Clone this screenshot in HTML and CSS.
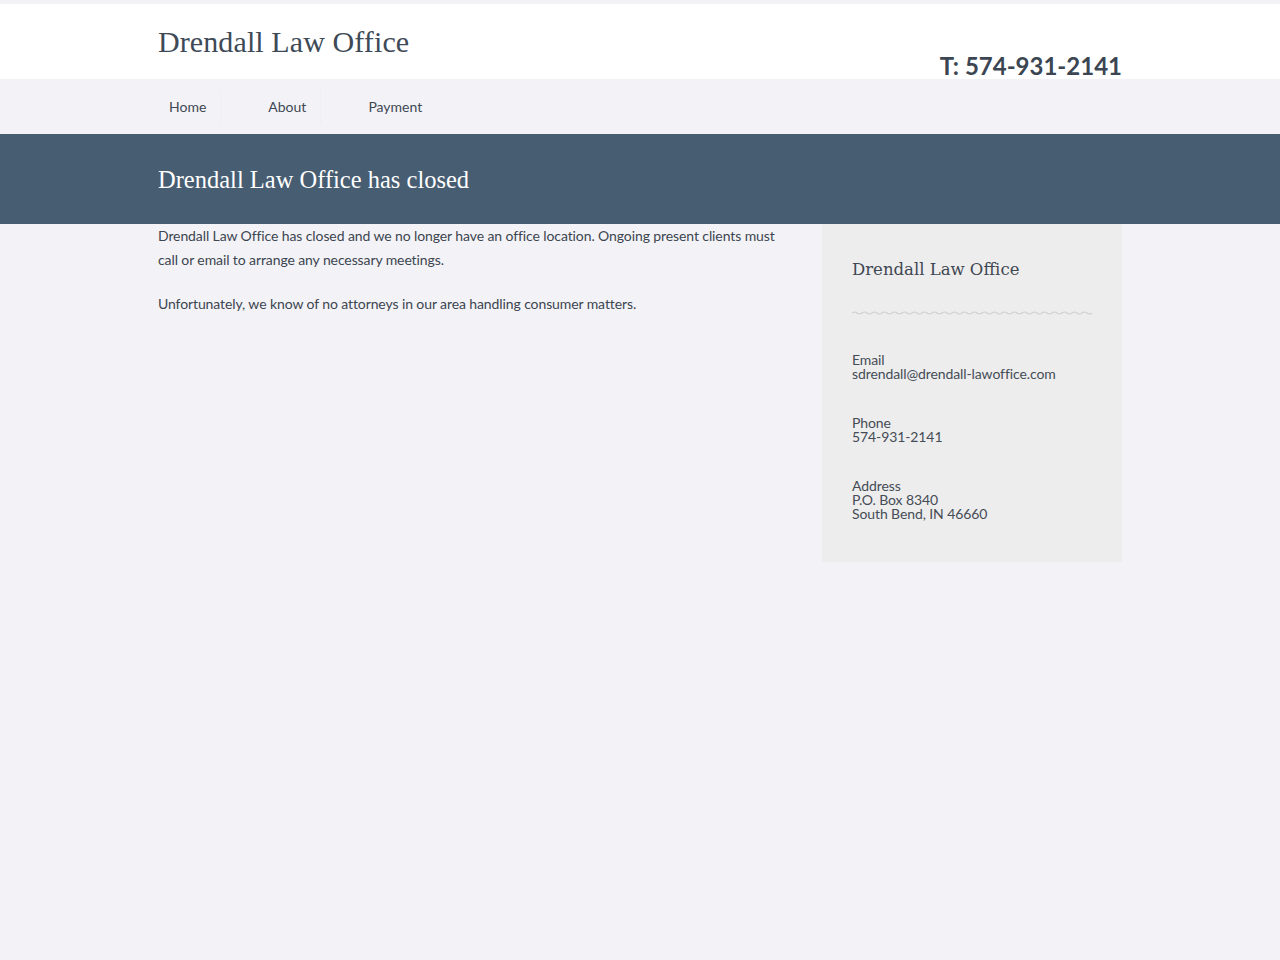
FILE: index.html
```html
<!DOCTYPE html>
<html lang="en">
<head>
<meta charset="utf-8">
<title>Drendall Law Office</title>
<link rel="stylesheet" href="styles.css">
</head>
<body>
<header class="masthead">
  <div class="wrap masthead-inner">
    <div class="site-title">Drendall Law Office</div>
    <div class="site-phone">T: 574-931-2141</div>
  </div>
</header>
<nav class="mainnav">
  <ul class="wrap nav-list">
    <li class="nav-item"><a href="#">Home</a></li>
    <li class="nav-item"><a href="#">About</a></li>
    <li class="nav-item"><a href="#">Payment</a></li>
  </ul>
</nav>
<section class="banner">
  <div class="wrap">
    <h1 class="banner-title">Drendall Law Office has closed</h1>
  </div>
</section>
<main class="wrap page">
  <div class="main-col">
    <p>Drendall Law Office has closed and we no longer have an office location. Ongoing present clients must call or email to arrange any necessary meetings.</p>
    <p>Unfortunately, we know of no attorneys in our area handling consumer matters.</p>
  </div>
  <aside class="sidebar">
    <h2 class="side-title">Drendall Law Office</h2>
    <svg class="wave" width="240" height="6" viewBox="0 0 240 6" aria-hidden="true">
      <path d="M0 3 Q2.5 1 5 3 T10 3 T15 3 T20 3 T25 3 T30 3 T35 3 T40 3 T45 3 T50 3 T55 3 T60 3 T65 3 T70 3 T75 3 T80 3 T85 3 T90 3 T95 3 T100 3 T105 3 T110 3 T115 3 T120 3 T125 3 T130 3 T135 3 T140 3 T145 3 T150 3 T155 3 T160 3 T165 3 T170 3 T175 3 T180 3 T185 3 T190 3 T195 3 T200 3 T205 3 T210 3 T215 3 T220 3 T225 3 T230 3 T235 3 T240 3" fill="none" stroke="#cfcfd2" stroke-width="1.2"/>
    </svg>
    <div class="contact">
      <div class="contact-block">Email<br>sdrendall@drendall-lawoffice.com</div>
      <div class="contact-block">Phone<br>574-931-2141</div>
      <div class="contact-block">Address<br>P.O. Box 8340<br>South Bend, IN 46660</div>
    </div>
  </aside>
</main>
</body>
</html>
```

FILE: styles.css
```css
* { box-sizing: border-box; }

html, body {
  margin: 0;
  padding: 0;
}

body {
  background: #f3f3f7;
  color: #3c4550;
  font-family: Lato, "Open Sans", sans-serif;
  font-size: 14px;
  padding-top: 4px;
}

.wrap {
  width: 964px;
  margin: 0 auto;
}

/* header */
.masthead {
  background: #ffffff;
  height: 75px;
}

.masthead-inner {
  display: flex;
  justify-content: space-between;
  align-items: flex-start;
  height: 100%;
}

.site-title {
  font-family: "Liberation Serif", "DejaVu Serif", serif;
  font-size: 30px;
  color: #3e4a57;
  margin-top: 23px;
  line-height: 1;
  letter-spacing: 0.1px;
}

.site-phone {
  font-weight: 700;
  font-size: 24px;
  color: #3b4652;
  margin-top: 50px;
  line-height: 1;
}

/* navigation */
.mainnav {
  height: 55px;
  background: #f3f3f7;
}

.nav-list {
  list-style: none;
  padding: 0;
  display: flex;
  height: 100%;
  align-items: center;
}

.nav-item {
  padding: 0 11px;
  margin-right: 40px;
  position: relative;
}

.nav-item a {
  color: #3e4853;
  text-decoration: none;
  font-size: 14px;
}

.nav-item + .nav-item::before {
  content: "";
  position: absolute;
  left: -37px;
  top: -8px;
  bottom: -8px;
  border-left: 1px solid #eeeef3;
}

/* banner */
.banner {
  background: #475d71;
  height: 90px;
}

.banner-title {
  margin: 0;
  padding-top: 30px;
  font-family: "Liberation Serif", "DejaVu Serif", serif;
  font-weight: 400;
  font-size: 24.5px;
  line-height: 32px;
  color: #ffffff;
}

/* content */
.page {
  display: flex;
  justify-content: space-between;
  align-items: flex-start;
}

.main-col {
  width: 630px;
}

.main-col p {
  margin: 0 0 20px;
  line-height: 24px;
  font-size: 14px;
  letter-spacing: -0.1px;
  color: #3c4550;
}

.sidebar {
  width: 300px;
  background: #ededee;
  padding: 34px 30px 41px;
}

.side-title {
  margin: 0;
  font-family: "DejaVu Serif", serif;
  font-weight: 400;
  font-size: 16.5px;
  line-height: 24px;
  color: #3f4751;
}

.wave {
  display: block;
  margin-top: 28px;
}

.contact {
  margin-top: 37px;
  display: flex;
  flex-direction: column;
  gap: 35px;
}

.contact-block {
  font-size: 14px;
  line-height: 14px;
  letter-spacing: -0.1px;
  color: #454c55;
}
```
